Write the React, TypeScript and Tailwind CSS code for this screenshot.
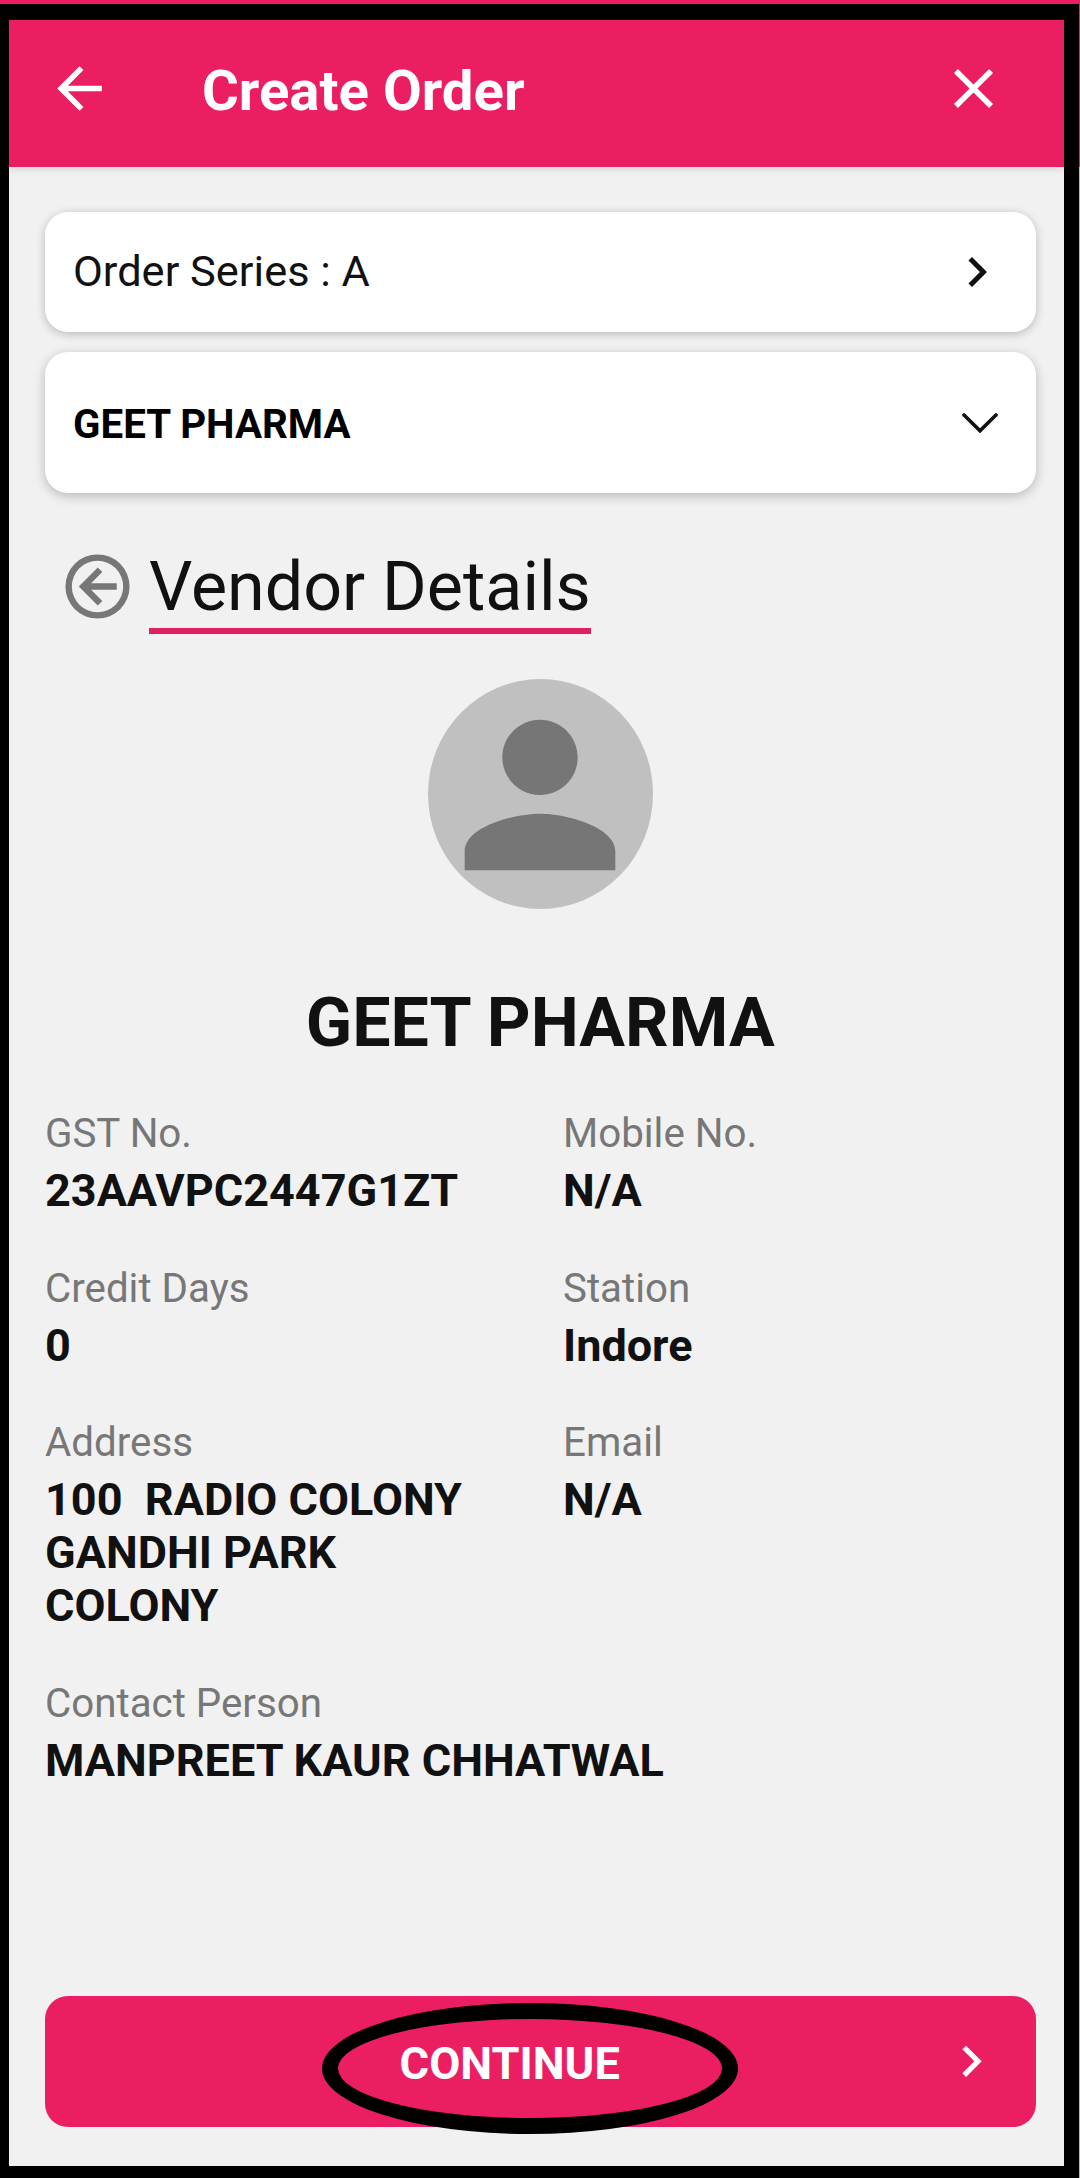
interface Detail {
  label: string;
  value: string;
  wide?: boolean;
}

const DETAILS: Detail[] = [
  { label: 'GST No.', value: '23AAVPC2447G1ZT' },
  { label: 'Mobile No.', value: 'N/A' },
  { label: 'Credit Days', value: '0' },
  { label: 'Station', value: 'Indore' },
  { label: 'Address', value: '100  RADIO COLONY\nGANDHI PARK\nCOLONY' },
  { label: 'Email', value: 'N/A' },
  { label: 'Contact Person', value: 'MANPREET KAUR CHHATWAL', wide: true },
];

function Icon({ d, className }: { d: string; className: string }) {
  return (
    <svg className={`shrink-0 ${className}`} viewBox="0 0 24 24" fill="currentColor">
      <path d={d} />
    </svg>
  );
}

const ICONS = {
  back: 'M20 11H7.83l5.59-5.59L12 4l-8 8 8 8 1.41-1.41L7.83 13H20v-2z',
  close: 'M19 6.41L17.59 5 12 10.59 6.41 5 5 6.41 10.59 12 5 17.59 6.41 19 12 13.41 17.59 19 19 17.59 13.41 12z',
  chevronRight: 'M10 6L8.59 7.41 13.17 12l-4.58 4.59L10 18l6-6z',
  backCircle:
    'M18 11v2h-8l3.5 3.5-1.42 1.42L6.16 12l5.92-5.92L13.5 7.5 10 11h8M2 12A10 10 0 0 1 12 2a10 10 0 0 1 10 10 10 10 0 0 1-10 10A10 10 0 0 1 2 12m2 0a8 8 0 0 0 8 8 8 8 0 0 0 8-8 8 8 0 0 0-8-8 8 8 0 0 0-8 8z',
  person:
    'M12 12c2.21 0 4-1.79 4-4s-1.79-4-4-4-4 1.79-4 4 1.79 4 4 4zm0 2c-2.67 0-8 1.34-8 4v2h16v-2c0-2.66-5.33-4-8-4z',
};

function DetailItem({ label, value, wide }: Detail) {
  return (
    <div className={`flex flex-col gap-[5px] ${wide ? 'col-span-2' : ''}`}>
      <span className="text-[40.3px] leading-[50px] text-[#777777]">{label}</span>
      <span className="text-[45px] leading-[53px] font-bold whitespace-pre">{value}</span>
    </div>
  );
}

export default function App() {
  return (
    <div className="w-[1080px] h-[2178px] bg-[linear-gradient(#ec1e62_167px,#bbbbbb_167px)] pt-1 pr-px font-['Roboto',sans-serif] text-[#111111]">
      <div className="h-full flex flex-col border-black border-t-[16px] border-r-[15px] border-b-[12px] border-l-[9px] bg-[#f1f1f1]">
        <header className="h-[147px] shrink-0 flex items-start bg-[#ec1e62] text-white pt-[34.5px] pl-[36.6px] pr-[56.6px] shadow-[0_2px_8px_rgba(0,0,0,0.12)]">
          <Icon d={ICONS.back} className="size-[67px]" />
          <h1 className="mt-[6px] ml-[89.4px] text-[56.3px] leading-[60px] font-bold">Create Order</h1>
          <Icon d={ICONS.close} className="ml-auto size-[67px]" />
        </header>

        <main className="flex-1 flex flex-col pt-[45px] pl-[36px] pr-[28.5px] pb-[39px]">
          <div className="flex flex-col gap-5">
            <div className="h-[120px] flex items-center justify-between rounded-[23px] bg-white pl-[28px] pr-[29px] shadow-[0_2px_10px_rgba(0,0,0,0.24)]">
              <span className="text-[43.4px]">Order Series : A</span>
              <Icon d={ICONS.chevronRight} className="size-[60px]" />
            </div>
            <div className="h-[141px] flex items-center justify-between rounded-[23px] bg-white pl-[28px] pr-[38px] shadow-[0_3px_12px_rgba(0,0,0,0.24)]">
              <span className="pt-[5px] text-[40.3px] font-bold text-black">GEET PHARMA</span>
              <svg className="w-9 h-5" viewBox="0 0 36 20" fill="none" stroke="currentColor" strokeWidth="3.6" strokeLinecap="round">
                <path d="M2 2l16 15.8L34 2" />
              </svg>
            </div>
          </div>

          <div className="mt-[53.7px] ml-[13.6px] flex items-start gap-[13.4px]">
            <Icon d={ICONS.backCircle} className="mt-[1.3px] size-[77px] text-[#777777]" />
            <h2 className="border-b-[6px] border-[#e02161] pb-[1.3px] text-[68.2px] leading-[80px]">Vendor Details</h2>
          </div>

          <div className="mt-[45px] self-center w-[225px] h-[230px] rounded-[50%] bg-[#c0c0c0] flex justify-center">
            <Icon d={ICONS.person} className="mt-[3px] size-[226px] text-[#767676]" />
          </div>
          <p className="mt-[73.8px] text-center text-[68.1px] leading-[80px] font-bold">GEET PHARMA</p>

          <div className="mt-[46.7px] grid grid-cols-[518px_1fr] gap-y-[46.5px]">
            {DETAILS.map((item) => (
              <DetailItem key={item.label} {...item} />
            ))}
          </div>

          <button className="relative mt-auto h-[131px] flex items-center rounded-[23px] bg-[#ec1e62] text-white pl-[34.5px] pr-[33px]">
            <span className="flex-1 pt-[5px] text-center text-[45.2px] font-bold">CONTINUE</span>
            <Icon d={ICONS.chevronRight} className="size-[62.6px]" />
            {/* Highlight ring around the label */}
            <span className="absolute left-[277px] top-[7px] w-[416.4px] h-[131px] rounded-[50%] border-[16px] border-black" />
          </button>
        </main>
      </div>
    </div>
  );
}
